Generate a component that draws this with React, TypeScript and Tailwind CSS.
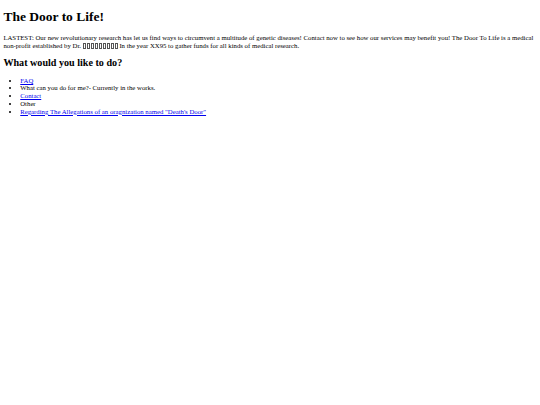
const Tofu = ({ count }: { count: number }) => (
  <span className="inline-flex gap-[1px] align-[-1px]">
    {Array.from({ length: count }).map((_, i) => (
      <span key={i} className="inline-block w-[3px] h-[6px] border-[0.5px] border-[#555]" />
    ))}
  </span>
);

export default function App() {
  return (
    <div className="min-h-screen bg-white px-[3.375px] pt-px text-black leading-[normal] font-['Liberation_Serif','Times_New_Roman',serif]">
      <h1 className="mt-[8px] mb-[9.05px] text-[13.5px] font-bold">The Door to Life!</h1>
      <p className="my-[6.75px] text-[6.75px] leading-[7.8px]">
        LASTEST: Our new revolutionary research has let us find ways to circumvent a multitude of genetic diseases! Contact now to see how our services may benefit you! The Door To Life is a medical non-profit established by Dr. <Tofu count={9} /> In the year XX95 to gather funds for all kinds of medical research.
      </p>
      <h2 className="mt-[7px] mb-[9px] text-[10.125px] font-bold">What would you like to do?</h2>
      <ul className="my-[6.75px] pl-[16.875px] list-disc text-[6.75px] leading-[7.8px]">
        <li>
          <a href="#" className="text-[#0000ee] underline">FAQ</a>
        </li>
        <li>What can you do for me?- Currently in the works.</li>
        <li>
          <a href="#" className="text-[#0000ee] underline">Contact</a>
        </li>
        <li>Other</li>
        <li>
          <a href="#" className="text-[#0000ee] underline">Regarding The Allegations of an oragnization named "Death's Door"</a>
        </li>
      </ul>
    </div>
  );
}
